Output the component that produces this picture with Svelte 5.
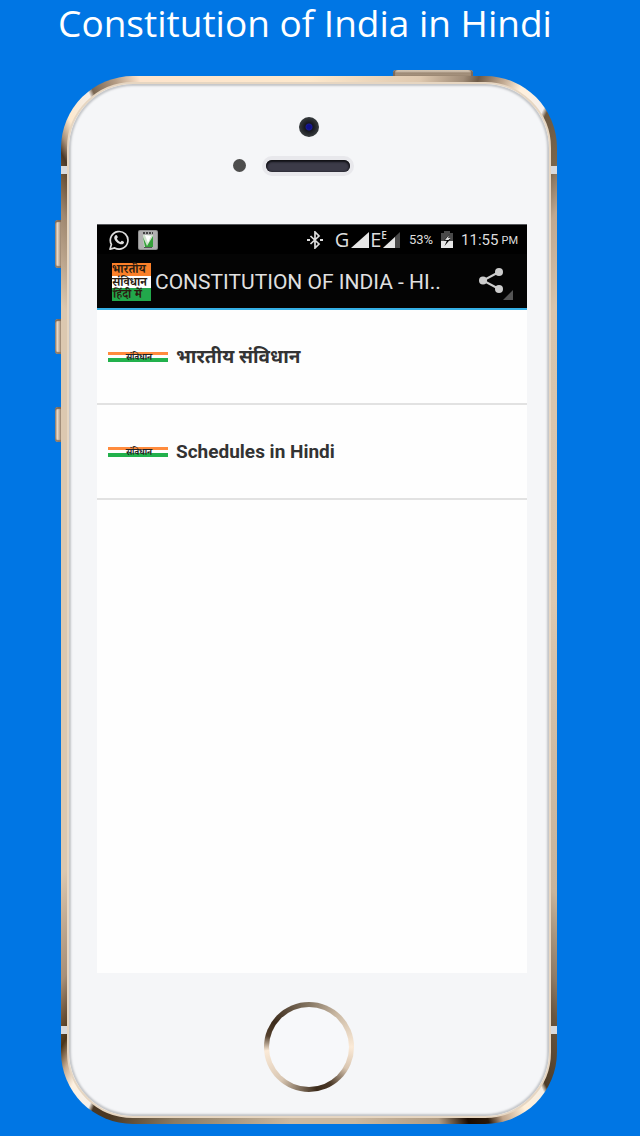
<script>
  const items = [
    { label: 'भारतीय संविधान', href: '#constitution' },
    { label: 'Schedules in Hindi', href: '#schedules' },
  ];
</script>

<main class="page">
  <h1>Constitution of India in Hindi</h1>

  <div class="phone">
    <span class="key power"></span>
    <span class="key mute"></span>
    <span class="key up"></span>
    <span class="key down"></span>
    <span class="band top"></span>
    <span class="band bottom"></span>

    <div class="face">
      <div class="sensors">
        <span class="camera"></span>
        <div class="ear">
          <span class="proximity"></span>
          <span class="speaker"></span>
        </div>
      </div>

      <div class="screen">
        <div class="status">
          <svg width="20" height="20" viewBox="0 0 20 20" aria-hidden="true">
            <path d="M1 19.2l1.4-4.7A8.8 8.8 0 1 1 5.7 17.9z" fill="none" stroke="#ddd" stroke-width="1.7" stroke-linejoin="round" />
            <path d="M6.5 5.2c.5-.5 1.2-.4 1.5.2l.8 1.7c.1.6-.6 1.1-.9 1.6.8 1.5 2 2.6 3.5 3.2.6-.3 1-1.3 1.6-1.2l1.8 1c.5.4.1 1.5-.5 2-1 .8-2.4.8-4 .1-2.300-1-4-2.800-4.900-4.900-.5-1.500.1-3 1.100-3.700z" fill="#ddd" />
          </svg>
          <svg width="20" height="20" viewBox="0 0 20 20" aria-hidden="true">
            <rect width="20" height="20" rx="2" fill="#8f8f8f" />
            <rect x="1" y="1" width="18" height="18" rx="1" fill="#b0b0b0" />
            <path d="M5 5h10l-1 12H6z" fill="#cfe3cc" />
            <path d="M5 3h10" stroke="#444" stroke-width="2" stroke-dasharray="2 1" />
            <path d="M5 7l4 9 6-10v11H7z" fill="#35a03a" />
            <path d="M7 5l3 8 3-7z" fill="#fff" />
            <path d="M6 17.5h8" stroke="#555" stroke-width="1" />
          </svg>

          <div class="signals">
            <svg width="16" height="18" viewBox="0 0 16 18" aria-hidden="true">
              <path d="M3.5 5l8.5 8-4 4V1l4 4-8.5 8" fill="none" stroke="#ddd" stroke-width="1.7" />
              <path d="M0 9h3M13 9h3" stroke="#ddd" stroke-width="2" />
            </svg>
            <span class="net">G</span>
            <svg width="18" height="16" viewBox="0 0 18 16" aria-hidden="true">
              <path d="M0 16L18 0v16z" fill="#e6e6e6" />
            </svg>
            <span class="net edge">E<sup>E</sup></span>
            <svg width="17" height="16" viewBox="0 0 17 16" aria-hidden="true">
              <path d="M0 16L17 0v16z" fill="#4a4a4a" />
              <path d="M0 16L12 5v11z" fill="#e6e6e6" />
            </svg>
            <span class="percent">53%</span>
            <svg class="battery" width="12" height="17" viewBox="0 0 12 17" aria-hidden="true">
              <path d="M3 0h6v2h3v15H0V2h3z" fill="#4a4a4a" />
              <path d="M0 10h12v7H0z" fill="#e6e6e6" />
              <path d="M8.5 3L3 9.500h3L3.500 15 9.500 8H6.500z" fill="#000" />
              <path d="M8 4L4 9h3.500l2-2H7z" fill="#ddd" />
            </svg>
            <span class="time">11:55</span>
            <span class="pm">PM</span>
          </div>
        </div>

        <header class="bar">
          <svg class="logo" width="39" height="38" viewBox="0 0 39 38" aria-hidden="true">
            <rect width="39" height="13" fill="#fb8029" />
            <rect y="13" width="39" height="12" fill="#fff" />
            <rect y="25" width="39" height="13" fill="#22a84b" />
            <text x="0" y="10" class="flag">भारतीय</text>
            <text x="0" y="23" class="flag">संविधान</text>
            <text x="1" y="35" class="flag">हिंदी में</text>
          </svg>
          <h2>CONSTITUTION OF INDIA - HI..</h2>
          <button aria-label="Share">
            <svg width="34" height="34" viewBox="0 0 34 34" aria-hidden="true">
              <path d="M20 5L4 13.500 20 22" fill="none" stroke="#ccc" stroke-width="2" />
              <circle cx="20" cy="5" r="4" fill="#ccc" />
              <circle cx="4" cy="13.500" r="4" fill="#ccc" />
              <circle cx="20" cy="22" r="4" fill="#ccc" />
              <path d="M34 23v10H24z" fill="#555" />
            </svg>
          </button>
        </header>

        <nav>
          {#each items as item}
            <a href={item.href}>
              <svg width="60" height="18" viewBox="0 0 60 18" aria-hidden="true">
                <rect y="4" width="60" height="3" fill="#ff8b3d" />
                <rect y="10" width="60" height="4" fill="#22b14c" />
                <text x="31" y="12" text-anchor="middle" class="stamp">संविधान</text>
              </svg>
              <span>{item.label}</span>
            </a>
          {/each}
        </nav>
      </div>

      <button class="home" aria-label="Home"></button>
    </div>
  </div>
</main>

<style>
  :global(body) {
    background: #0076e4;
  }

  .page {
    padding: 0 22px 13px 0;
    font-family: Roboto, "Noto Sans Devanagari", "Noto Sans", sans-serif;
  }

  h1 {
    margin: 0 8px 30px 0;
    text-align: center;
    color: #fff;
    font-family: "Open Sans", sans-serif;
    font-size: 37px;
    font-weight: 400;
    line-height: 46px;
  }

  .phone {
    position: relative;
    box-sizing: border-box;
    max-width: 496px;
    margin: 0 auto;
    padding: 6px;
    border-radius: 72px;
    background: conic-gradient(
      #fde8cc 0deg, #dfc9b0 12deg, #a08c78 16.5deg, #6d5a47 18deg, #c0a890 20.5deg,
      #fff0dc 22.5deg, #f5f0ee 25.5deg, #6b5842 26deg, #7a664c 29.5deg, #8a7660 30deg,
      #c0a890 32.5deg, #d8c4ac 40deg, #dcc8b0 90deg, #c8b49c 140deg, #8f7b65 147deg, #6a5640 149.5deg,
      #4d3c28 154deg, #f5eee4 154.5deg, #fff0da 157deg, #c0a48a 159.5deg, #2a1808 161deg,
      #1a0a00 163deg, #b09c84 166deg, #cbb8a0 175deg, #cbb8a0 182deg, #8a7a62 194.5deg, #4a3824 201deg,
      #4a3824 203deg, #f5f0ea 203.5deg, #fdf0e0 206deg, #c8ac90 207.5deg, #4a3418 209deg,
      #6b5238 210.5deg, #a89078 213deg, #dcc8b0 222deg, #dcc8b0 320deg, #a08870 327.5deg,
      #6a5238 330deg, #4a3828 331deg, #a89078 332deg, #fde8cc 333.5deg, #f5eee8 336.5deg,
      #7a6652 337deg, #b49c84 339.5deg, #fde4cc 342deg, #fde8cc 360deg
    );
  }

  .face {
    display: flex;
    flex-direction: column;
    align-items: center;
    padding: 33px 0 24px;
    border: 2px solid #e6d6c2;
    border-radius: 66px;
    background: #f5f6f8;
    box-shadow: inset 0 0 2px 2px #c4c6c9;
  }

  .key {
    position: absolute;
    left: -6px;
    width: 6px;
    height: 35px;
    border-radius: 3px 0 0 3px;
    background: linear-gradient(90deg, #8b7a69, #e9d8c6 40%, #a08b76);
    box-shadow: inset 0 2px 1px #7a6858, inset 0 -2px 1px #8c7967;
  }

  .mute {
    top: 144px;
    height: 48px;
  }

  .up {
    top: 243px;
  }

  .down {
    top: 331px;
  }

  .power {
    top: -6px;
    left: 332px;
    width: 80px;
    height: 6px;
    border-radius: 3px 3px 0 0;
    background: linear-gradient(#f3e6d6, #9d8a76 50%, #a8947f);
    box-shadow: inset 2px 0 1px #7a6858, inset -2px 0 1px #7a6858;
  }

  .band {
    position: absolute;
    left: 0;
    right: 0;
    height: 8px;
    border: solid #d9dadd;
    border-width: 0 6px;
    box-sizing: border-box;
  }

  .band.top {
    top: 90px;
  }

  .band.bottom {
    bottom: 90px;
  }

  .sensors {
    display: flex;
    flex-direction: column;
    align-items: center;
    gap: 22px;
    padding-bottom: 52px;
  }

  .camera {
    width: 20px;
    height: 20px;
    border-radius: 50%;
    background: radial-gradient(circle, #10108a 0 2px, #1a1a90 3px, #16171e 4px, #33373a 9px);
  }

  .ear {
    display: flex;
    align-items: center;
    gap: 20px;
    padding-right: 35px;
  }

  .proximity {
    width: 13px;
    height: 13px;
    border-radius: 50%;
    background: #4d4d4d;
  }

  .speaker {
    width: 84px;
    height: 12px;
    border-radius: 6px;
    background: #3c3b48;
    box-shadow: inset 0 1px 2px 1px #111116, 0 0 0 4px #e8e8ec;
  }

  .screen {
    box-sizing: border-box;
    width: calc(100% - 50px);
    aspect-ratio: 430 / 749;
    margin: 0 22px 29px 28px;
    background: #fefefe;
  }

  .status {
    display: flex;
    align-items: center;
    gap: 9px;
    box-sizing: border-box;
    height: 30px;
    padding: 0 9px 0 12px;
    border-top: 1px solid #55565a;
    background: #000;
    color: #ddd;
  }

  .signals {
    display: flex;
    flex: 1;
    align-items: center;
    justify-content: flex-end;
  }

  .net {
    margin: 0 2px 0 12px;
    font-family: "Open Sans", sans-serif;
    font-size: 20px;
    line-height: 20px;
  }

  .edge {
    display: flex;
    margin: 0 -4px 0 1px;
  }

  .edge sup {
    font-size: 10px;
    line-height: 10px;
    font-weight: 600;
  }

  .percent {
    margin-left: 9px;
    font-size: 13px;
  }

  .battery {
    margin: 0 8px;
  }

  .time {
    font-size: 15px;
  }

  .pm {
    margin-left: 3px;
    padding-top: 2px;
    font-size: 11px;
  }

  .bar {
    display: flex;
    align-items: center;
    box-sizing: border-box;
    height: 56px;
    padding: 2px 14px 0 15px;
    border-bottom: 2px solid #35b0e6;
    background: #040404;
  }

  h2 {
    flex: 1;
    margin: 0 0 0 4px;
    overflow: hidden;
    color: #e0e0e0;
    font-size: 21px;
    font-weight: 400;
    line-height: 30px;
    white-space: nowrap;
  }

  .bar button {
    display: flex;
    padding: 4px 0 0;
    border: 0;
    background: none;
    cursor: pointer;
  }

  .logo {
    overflow: visible;
  }

  .flag {
    font-family: "Noto Serif Devanagari", "Noto Sans Devanagari", serif;
    font-size: 12px;
    font-weight: 700;
    fill: #2b1c10;
  }

  .stamp {
    font-family: "Noto Serif Devanagari", "Noto Sans Devanagari", serif;
    font-size: 9px;
    font-weight: 700;
    fill: #222;
  }

  nav a {
    display: flex;
    align-items: center;
    gap: 8px;
    box-sizing: border-box;
    height: 95px;
    padding: 0 11px;
    border-bottom: 2px solid #e2e2e2;
    color: #333;
    font-size: 19px;
    font-weight: 700;
    line-height: 26px;
    text-decoration: none;
  }

  .home {
    width: 90px;
    height: 90px;
    padding: 0;
    border: 5px solid transparent;
    border-radius: 50%;
    background:
      linear-gradient(#f7f8fa, #f7f8fa) padding-box,
      conic-gradient(#857663, #c9b8a3 40deg, #fbead7 90deg, #d8c5b0 120deg, #4a3826 150deg, #3c2b1b 170deg, #8a7966 195deg, #d9c7b3 220deg, #fbead7 265deg, #54412e 285deg, #3c2b1b 305deg, #857663) border-box;
    cursor: pointer;
  }
</style>
